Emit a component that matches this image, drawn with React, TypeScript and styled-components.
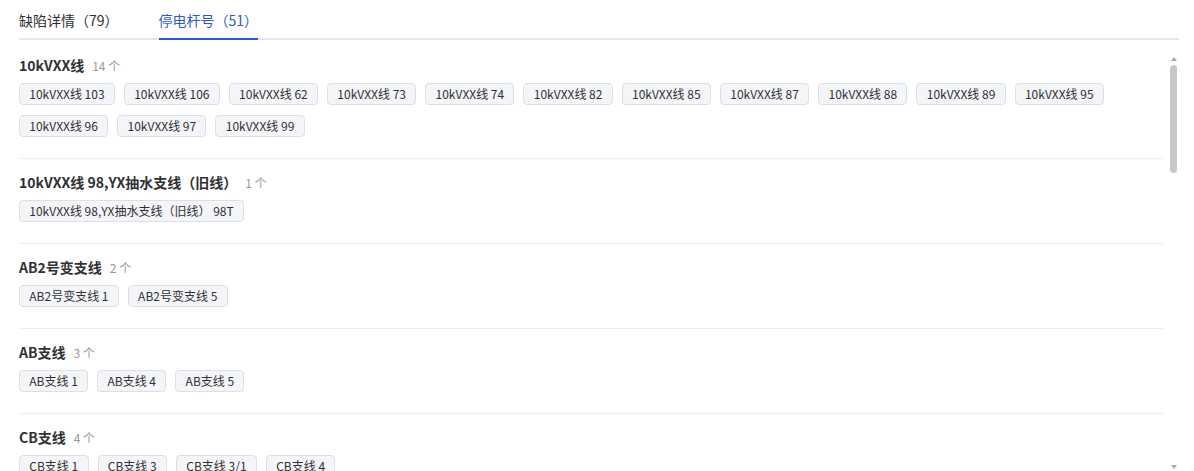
import React from "react";
import styled, { createGlobalStyle } from "styled-components";

type Group = { name: string; poles: string[] };

const GROUPS: Group[] = [
  {
    name: "10kVXX线",
    poles: ["103", "106", "62", "73", "74", "82", "85", "87", "88", "89", "95", "96", "97", "99"],
  },
  { name: "10kVXX线 98,YX抽水支线（旧线）", poles: ["98T"] },
  { name: "AB2号变支线", poles: ["1", "5"] },
  { name: "AB支线", poles: ["1", "4", "5"] },
  { name: "CB支线", poles: ["1", "3", "3/1", "4"] },
  { name: "CD支线", poles: ["2", "6"] },
  { name: "DE支线", poles: ["1", "2", "7"] },
  { name: "DF号变支线", poles: ["3"] },
  { name: "EF支线", poles: ["2", "5"] },
  { name: "FG支线", poles: ["1", "4"] },
  { name: "GH支线", poles: ["6", "8"] },
  { name: "HJ支线", poles: ["2", "3", "9"] },
  { name: "JK支线", poles: ["1"] },
  { name: "KL号变支线", poles: ["4", "5"] },
  { name: "LM支线", poles: ["2", "3"] },
  { name: "MN支线", poles: ["1", "7"] },
  { name: "NP支线", poles: ["5", "6"] },
  { name: "PQ支线", poles: ["3"] },
];

function App() {
  const [tab, setTab] = React.useState<string>("poles");

  return (
    <Page>
      <GlobalStyle />
      <TabBar>
        <Tab $active={tab === "defects"} onClick={() => setTab("defects")}>
          缺陷详情（79）
        </Tab>
        <Tab $active={tab === "poles"} onClick={() => setTab("poles")}>
          停电杆号（51）
        </Tab>
      </TabBar>

      <ScrollFrame>
        <ScrollContent>
          {GROUPS.map((g) => (
            <GroupBlock key={g.name}>
              <GroupTitle>
                {g.name}
                <Count>{g.poles.length} 个</Count>
              </GroupTitle>
              <TagList>
                {g.poles.map((p) => (
                  <Tag key={p}>
                    {g.name} {p}
                  </Tag>
                ))}
              </TagList>
            </GroupBlock>
          ))}
        </ScrollContent>

        {/* scrollbar drawn by hand, the native one is hidden in headless */}
        <ScrollTrack>
          <ScrollButton>
            <svg width="9" height="15" viewBox="0 0 9 15">
              <path d="M4 7 L7 11 L1 11 Z" fill="#a8a8a8" />
            </svg>
          </ScrollButton>
          <Thumb />
          <TrackSpace />
          <ScrollButton>
            <svg width="9" height="15" viewBox="0 0 9 15">
              <path d="M1 6 L7 6 L4 10 Z" fill="#a8a8a8" />
            </svg>
          </ScrollButton>
        </ScrollTrack>
      </ScrollFrame>
    </Page>
  );
}

const GlobalStyle = createGlobalStyle`
  html, body {
    margin: 0;
    overflow: hidden;
    background: #fff;
  }
  body {
    font-family: "Noto Sans CJK SC", "Noto Sans", sans-serif;
  }
`;

const Page = styled.div`
  padding: 0 15px 0 19px;
`;

const TabBar = styled.div`
  display: flex;
  border-bottom: 2px solid #e4e7ed;
`;

const Tab = styled.div<{ $active?: boolean }>`
  position: relative;
  height: 38px;
  line-height: 40px;
  margin: 0 20px;
  font-size: 14px;
  color: ${(p) => (p.$active ? "#2d5ac8" : "#303133")};
  cursor: pointer;

  &:first-child {
    margin-left: 0;
  }
  &:last-child {
    margin-right: 0;
  }

  &::after {
    content: "";
    position: absolute;
    left: 0;
    right: 0;
    bottom: -2px;
    height: 2px;
    background: ${(p) => (p.$active ? "#2d5ac8" : "transparent")};
  }
`;

const ScrollFrame = styled.div`
  display: flex;
  margin-top: 10px;
  height: 424px;
`;

const ScrollContent = styled.div`
  flex: 1;
  min-width: 0;
  overflow: hidden;
  padding-right: 6px;
`;

const ScrollTrack = styled.div`
  width: 9px;
  display: flex;
  flex-direction: column;
`;

const ScrollButton = styled.div`
  height: 15px;
  display: flex;

  svg {
    display: block;
  }
`;

const Thumb = styled.div`
  width: 7px;
  height: 108px;
  background: #c8c8c8;
  border-radius: 4px;
`;

const TrackSpace = styled.div`
  flex: 1;
`;

const GroupBlock = styled.div`
  padding: 13px 0 21px;
  border-bottom: 1px solid #ebeef5;

  &:first-child {
    padding-top: 5px;
  }
`;

const GroupTitle = styled.div`
  display: flex;
  align-items: baseline;
  height: 20px;
  line-height: 20px;
  font-size: 14px;
  font-weight: 700;
  color: #303133;
`;

const Count = styled.span`
  margin-left: 8px;
  font-size: 12px;
  font-weight: 400;
  color: #999;
`;

const TagList = styled.div`
  display: flex;
  flex-wrap: wrap;
  gap: 10px 9px;
  margin-top: 8px;
`;

const Tag = styled.span`
  box-sizing: border-box;
  height: 22px;
  line-height: 20px;
  padding: 0 9.3px;
  font-size: 12px;
  color: #303133;
  background: #f4f5f8;
  border: 1px solid #dcdfe6;
  border-radius: 4px;
  white-space: nowrap;
`;

export default App;
